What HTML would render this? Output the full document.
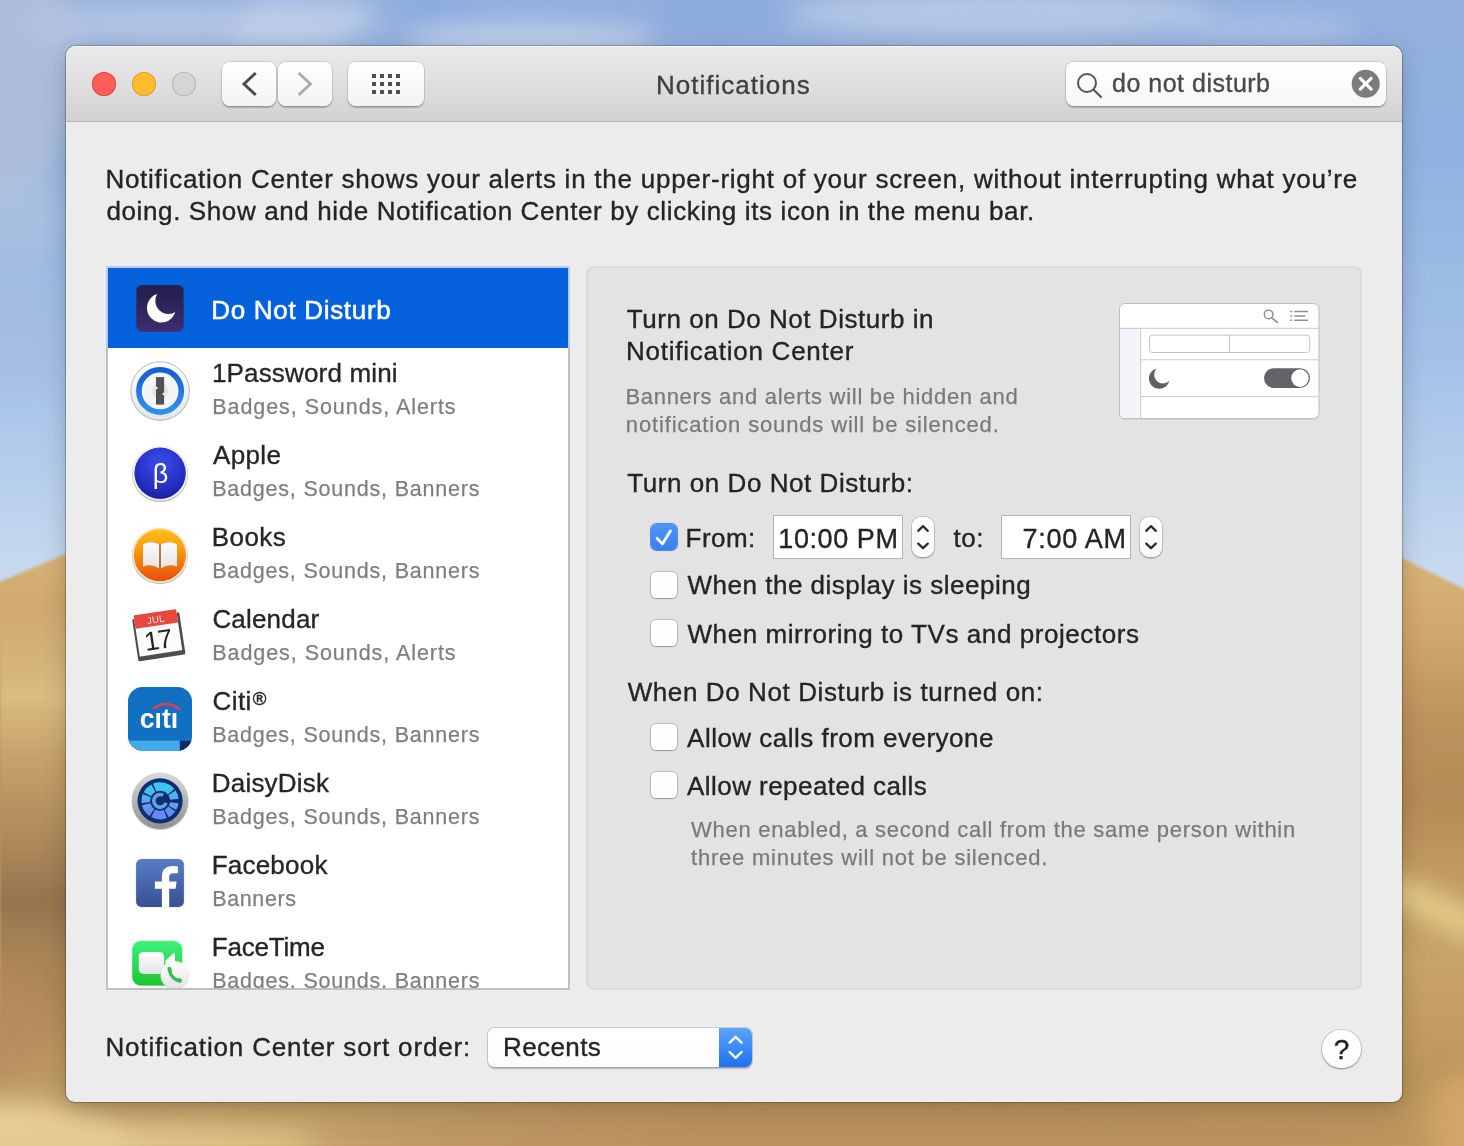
<!DOCTYPE html>
<html lang="en">
<head>
<meta charset="utf-8">
<title>Notifications</title>
<style>
*{box-sizing:border-box;margin:0;padding:0}
html,body{width:1464px;height:1146px;overflow:hidden;background:#b89a6a}
body{position:relative;font-family:"Liberation Sans",sans-serif;-webkit-font-smoothing:antialiased}
.abs{position:absolute}
.t{position:absolute;white-space:pre;font-family:"Liberation Sans",sans-serif}
#wall{position:absolute;left:0;top:0;width:1464px;height:1146px}
#win{position:absolute;left:66px;top:46px;width:1336px;height:1056px;border-radius:10px 10px 9px 9px;background:#ececec;
 box-shadow:0 0 0 1px rgba(0,0,0,.2),0 8px 24px rgba(0,0,0,.19),0 1px 4px rgba(0,0,0,.10)}
#tb{position:absolute;left:0;top:0;width:1336px;height:76px;border-radius:10px 10px 0 0;
 background:linear-gradient(#e9e9e9 0%,#e4e4e4 30%,#d2d2d2 100%);border-bottom:1px solid #b3b3b3;box-shadow:inset 0 1px 0 rgba(255,255,255,.65)}
.tl{position:absolute;top:72px;width:24px;height:24px;border-radius:50%}
.btn{position:absolute;top:62px;height:44px;border-radius:8px;background:linear-gradient(#ffffff,#f3f3f3);
 box-shadow:0 0 0 1px rgba(0,0,0,.10),0 1.5px 1.5px rgba(0,0,0,.22)}
#list{position:absolute;left:106px;top:266px;width:464px;height:724px;background:#fff}
#listb{position:absolute;left:106px;top:266px;width:464px;height:724px;border:2px solid #c0c0c0;pointer-events:none}
#listb2{position:absolute;left:106px;top:266px;width:464px;height:82px;border:2px solid #b4cbef;border-bottom:none;pointer-events:none}
#sel{position:absolute;left:108px;top:268px;width:460px;height:80px;background:#0661dd}
#cover{position:absolute;left:100px;top:990px;width:480px;height:14px;background:#ececec}
#pane{position:absolute;left:586px;top:266px;width:776px;height:724px;background:#e3e3e3;border:2px solid #dbdbdb;border-radius:8px}
.cb{position:absolute;left:651px;width:26px;height:26px;margin-top:1px;border-radius:5.5px;background:linear-gradient(#ffffff,#fbfbfb);
 box-shadow:0 0 0 1px rgba(0,0,0,.17),0 1px 1.5px rgba(0,0,0,.18)}
.cb.on{background:linear-gradient(#4f95f8,#3880f5);box-shadow:0 0 0 1px rgba(40,110,235,.75),0 1px 1.5px rgba(0,0,0,.12)}
.tf{position:absolute;top:515px;width:130px;height:44px;background:#fff;border:1px solid #b4b4b4}
.st{position:absolute;top:517px;width:22px;height:40px;border-radius:9px;background:linear-gradient(#fff,#fafafa);
 box-shadow:0 0 0 1px rgba(0,0,0,.14),0 1.5px 1.5px rgba(0,0,0,.22)}
svg{position:absolute;overflow:visible}
</style>
</head>
<body>
<!--WALL_START-->
<svg id="wall" width="1464" height="1146" viewBox="0 0 1464 1146">
<defs>
<linearGradient id="sky" gradientUnits="userSpaceOnUse" x1="0" y1="0" x2="0" y2="600">
<stop offset="0" stop-color="#93afdc"/><stop offset="0.25" stop-color="#90b2e0"/><stop offset="0.6" stop-color="#a3c1e8"/><stop offset="0.95" stop-color="#c6d9ef"/>
</linearGradient>
<linearGradient id="duneL" gradientUnits="userSpaceOnUse" x1="0" y1="470" x2="0" y2="1156">
<stop offset="0.13" stop-color="#d6b073"/><stop offset="0.2" stop-color="#cfa970"/><stop offset="0.27" stop-color="#d3b178"/><stop offset="0.33" stop-color="#dabb82"/><stop offset="0.42" stop-color="#c6a16a"/><stop offset="0.55" stop-color="#ab875a"/><stop offset="0.63" stop-color="#96744d"/><stop offset="0.70" stop-color="#a88356"/><stop offset="0.80" stop-color="#b48e5c"/><stop offset="0.92" stop-color="#c3a068"/><stop offset="1" stop-color="#dcc088"/>
</linearGradient>
<linearGradient id="duneR" gradientUnits="userSpaceOnUse" x1="0" y1="470" x2="0" y2="1156">
<stop offset="0.13" stop-color="#d9b378"/><stop offset="0.25" stop-color="#cfa66c"/><stop offset="0.36" stop-color="#be935d"/><stop offset="0.48" stop-color="#b58b57"/><stop offset="0.57" stop-color="#c0985f"/><stop offset="0.72" stop-color="#c9a468"/><stop offset="0.88" stop-color="#bd965c"/><stop offset="1" stop-color="#c19a5f"/>
</linearGradient>
<linearGradient id="lr" x1="0" y1="0" x2="1" y2="0">
<stop offset="0" stop-color="#fff" stop-opacity="1"/><stop offset="0.12" stop-color="#fff" stop-opacity="1"/><stop offset="0.5" stop-color="#fff" stop-opacity="0"/>
</linearGradient>
<mask id="mL"><rect width="1464" height="1146" fill="url(#lr)"/></mask>
<filter id="b14" x="-30%" y="-100%" width="160%" height="300%"><feGaussianBlur stdDeviation="12"/></filter>
<filter id="b6" x="-30%" y="-100%" width="160%" height="300%"><feGaussianBlur stdDeviation="6"/></filter>
<filter id="b2"><feGaussianBlur stdDeviation="1.5"/></filter>
</defs>
<rect width="1464" height="620" fill="url(#sky)"/>
<g filter="url(#b14)">
<ellipse cx="0" cy="70" rx="80" ry="130" fill="#b3bfd8" opacity=".8"/>
<rect x="-40" y="160" width="100" height="230" fill="#a8bcdc" opacity=".45"/>
<ellipse cx="170" cy="24" rx="150" ry="22" fill="#b6c7e5" opacity=".85"/>
<path d="M250,0 L420,0 L330,50 L230,50 Z" fill="#c3d1ea" opacity=".8"/>
<ellipse cx="530" cy="40" rx="125" ry="17" fill="#bdcce8" opacity="1"/>
<ellipse cx="1000" cy="14" rx="215" ry="24" fill="#b8c9e7" opacity=".9"/>
<ellipse cx="1270" cy="28" rx="90" ry="13" fill="#afc4e6" opacity=".8"/>
<ellipse cx="15" cy="215" rx="50" ry="40" fill="#b0c4e3" opacity=".55"/>
<ellipse cx="420" cy="8" rx="60" ry="14" fill="#8aabde" opacity=".8"/>
<ellipse cx="720" cy="14" rx="70" ry="22" fill="#89aadd" opacity=".75"/>
</g>
<g filter="url(#b2)">
<path d="M-10,586 L66,554 L300,480 L1100,470 L1402,558 L1474,594 L1474,1156 L-10,1156 Z" fill="url(#duneR)"/>
<path d="M-10,586 L66,554 L300,480 L700,470 L700,1156 L-10,1156 Z" fill="url(#duneL)" mask="url(#mL)"/>
</g>
<g filter="url(#b14)">
<path d="M1380,868 L1480,912 L1480,946 L1380,898 Z" fill="#ecd896" opacity=".8"/>
<ellipse cx="-10" cy="1152" rx="150" ry="50" fill="#ecd39a" opacity=".85"/>
<ellipse cx="120" cy="1150" rx="190" ry="22" fill="#e2c88e" opacity=".6"/>
<ellipse cx="0" cy="1030" rx="40" ry="60" fill="#b98a5c" opacity=".5"/>
<ellipse cx="1470" cy="1120" rx="40" ry="50" fill="#dcaa6c" opacity=".7"/>
<ellipse cx="860" cy="1135" rx="560" ry="30" fill="#b38d5e" opacity=".65"/>
</g>
</svg>
<!--WALL_END-->
<div id="win"><div id="tb"></div></div>
<!--TOOLBAR_START-->
<div class="tl" style="left:92px;background:#fc5f58;box-shadow:inset 0 0 0 1px #df4840"></div>
<div class="tl" style="left:132px;background:#fdbc2f;box-shadow:inset 0 0 0 1px #dea023"></div>
<div class="tl" style="left:172px;background:#d5d5d5;box-shadow:inset 0 0 0 1px #b6b6b6"></div>
<div class="btn" style="left:222px;width:54px"></div>
<div class="btn" style="left:278px;width:54px"></div>
<div class="btn" style="left:348px;width:76px"></div>
<div class="btn" style="left:1066px;width:320px;background:linear-gradient(#ffffff,#f7f7f7)"></div>
<svg style="left:0;top:0" width="1464" height="130" viewBox="0 0 1464 130">
<path d="M254.6,74 L244,84 L254.6,94" fill="none" stroke="#4c4c4c" stroke-width="3" stroke-linecap="square" stroke-linejoin="miter"/>
<path d="M299.8,74 L310.4,84 L299.8,94" fill="none" stroke="#ababab" stroke-width="3" stroke-linecap="square" stroke-linejoin="miter"/>
<g fill="#505050">
<rect x="372" y="74" width="4" height="4"/><rect x="380" y="74" width="4" height="4"/><rect x="388" y="74" width="4" height="4"/><rect x="396" y="74" width="4" height="4"/>
<rect x="372" y="82" width="4" height="4"/><rect x="380" y="82" width="4" height="4"/><rect x="388" y="82" width="4" height="4"/><rect x="396" y="82" width="4" height="4"/>
<rect x="372" y="90" width="4" height="4"/><rect x="380" y="90" width="4" height="4"/><rect x="388" y="90" width="4" height="4"/><rect x="396" y="90" width="4" height="4"/>
</g>
<circle cx="1087" cy="83" r="9" fill="none" stroke="#555" stroke-width="2"/>
<path d="M1093.6,89.8 L1101,97" stroke="#555" stroke-width="2.2" stroke-linecap="round"/>
<circle cx="1365.7" cy="83.8" r="14" fill="#7c7c7c"/>
<path d="M1360.3,78.4 L1371.1,89.2 M1371.1,78.4 L1360.3,89.2" stroke="#fff" stroke-width="3.1" stroke-linecap="round"/>
</svg>
<!--TOOLBAR_END-->
<div id="list"></div>
<div id="sel"></div>
<div id="pane"></div>
<!--ICONS_START-->
<div class="abs" style="left:108px;top:268px;width:460px;height:720px;overflow:hidden">
<!-- Do Not Disturb -->
<svg style="left:12px;top:2px" width="80" height="80" viewBox="0 0 80 80">
<defs><linearGradient id="gd" x1="0" y1="0" x2="0" y2="1"><stop offset="0" stop-color="#211f4c"/><stop offset="1" stop-color="#3f2d70"/></linearGradient></defs>
<rect x="15.9" y="14.7" width="48.2" height="47.4" rx="6.2" fill="#0a3f9c" opacity=".5"/>
<rect x="16.5" y="15.2" width="47" height="46.3" rx="5.6" fill="url(#gd)"/>
<path d="M37.1,24.1 A14.5,14.5 0 1 0 55.3,42.1 A13.2,13.2 0 0 1 37.1,24.1 Z" fill="#fff"/>
</svg>
<!-- 1Password -->
<svg style="left:12px;top:82px" width="80" height="80" viewBox="0 0 80 80">
<defs><linearGradient id="g1a" x1="0" y1="0" x2="0" y2="1"><stop offset="0" stop-color="#ffffff"/><stop offset="1" stop-color="#e4e6ea"/></linearGradient>
<linearGradient id="g1b" x1="0" y1="0" x2="0" y2="1"><stop offset="0" stop-color="#155fd0"/><stop offset="1" stop-color="#2e90ee"/></linearGradient></defs>
<circle cx="40.1" cy="41.5" r="29.6" fill="#000" opacity=".16"/><circle cx="40.1" cy="40.9" r="29.2" fill="url(#g1a)" stroke="#b9bcc2" stroke-width="1"/>
<circle cx="40.1" cy="40.9" r="24.6" fill="#dfeafb"/>
<circle cx="40.1" cy="40.9" r="21.2" fill="#f4f5f7" stroke="url(#g1b)" stroke-width="5.6"/>
<circle cx="40.1" cy="40.9" r="8" fill="#e3e3e5"/>
<rect x="36" y="27.1" width="8.1" height="27.5" fill="#515155"/>
<circle cx="36.3" cy="38" r="1.3" fill="#f4f5f7"/><circle cx="43.8" cy="44" r="1.3" fill="#f4f5f7"/>
</svg>
<!-- Apple beta -->
<svg style="left:12px;top:164px" width="80" height="80" viewBox="0 0 80 80">
<defs><radialGradient id="g2" cx="0.5" cy="0.3" r="0.75"><stop offset="0" stop-color="#3a4de6"/><stop offset="0.6" stop-color="#2832c8"/><stop offset="1" stop-color="#1a1c98"/></radialGradient></defs>
<circle cx="40.1" cy="42.1" r="28" fill="#000" opacity=".28"/>
<circle cx="40.1" cy="41.2" r="27.6" fill="#f2f3fb"/>
<circle cx="40.1" cy="41.2" r="25.7" fill="url(#g2)"/>
<text x="40.4" y="50.6" font-family="Liberation Sans, sans-serif" font-size="27" fill="#fff" text-anchor="middle">β</text>
</svg>
<!-- Books -->
<svg style="left:12px;top:246px" width="80" height="80" viewBox="0 0 80 80">
<defs><linearGradient id="g3" x1="0" y1="0" x2="0" y2="1"><stop offset="0" stop-color="#fdc01a"/><stop offset="0.45" stop-color="#f79310"/><stop offset="1" stop-color="#e64d0c"/></linearGradient>
<linearGradient id="g3p" x1="0" y1="0" x2="0" y2="1"><stop offset="0" stop-color="#fdfdfd"/><stop offset="1" stop-color="#e3e3e3"/></linearGradient></defs>
<circle cx="39.9" cy="42.1" r="28.1" fill="#000" opacity=".26"/>
<circle cx="39.9" cy="41.2" r="27.8" fill="#fbe6c8"/>
<circle cx="39.9" cy="41.2" r="26" fill="url(#g3)"/>
<path d="M23,30.2 Q31.5,26 39.2,30.4 L39.2,54.6 Q31.5,49 23,52.6 Z" fill="url(#g3p)"/>
<path d="M57,30.2 Q48.5,26 40.8,30.4 L40.8,54.6 Q48.5,49 57,52.6 Z" fill="url(#g3p)"/>
<path d="M40,30.6 V54.4" stroke="#9a6a3a" stroke-width="1.4"/>
</svg>
<!-- Calendar -->
<svg style="left:12px;top:328px" width="80" height="80" viewBox="0 0 80 80">
<g transform="rotate(-8.6 38.5 38)">
<rect x="14.6" y="19.5" width="47.6" height="42.6" rx="1.5" fill="#4d4d50"/>
<rect x="16.6" y="16" width="43" height="41.5" rx="1" fill="#fbfbfb"/>
<path d="M16.6,17 Q16.6,16 17.6,16 H58.6 Q59.6,16 59.6,17 V29.5 H16.6 Z" fill="#e9463f"/>
<text x="38" y="26.6" font-family="Liberation Sans, sans-serif" font-size="9.5" fill="#fde9e6" text-anchor="middle" letter-spacing="0.3">JUL</text>
<text x="37" y="53" font-family="Liberation Sans, sans-serif" font-size="26.5" fill="#222" text-anchor="middle" letter-spacing="-1">17</text>
</g>
</svg>
<!-- Citi -->
<svg style="left:12px;top:410px" width="80" height="80" viewBox="0 0 80 80">
<defs><clipPath id="cc"><rect x="8" y="9.1" width="64" height="63.6" rx="14.5"/></clipPath></defs>
<g clip-path="url(#cc)">
<rect x="8" y="9" width="64" height="64" fill="#1070c1"/>
<rect x="8" y="62.6" width="64" height="11" fill="#43a9ea"/>
<rect x="59.8" y="62.6" width="13" height="11" fill="#0b2c6a"/>
</g>
<path d="M33.8,30.4 Q46,21.4 59.2,31.2" fill="none" stroke="#dc3d55" stroke-width="2.6" stroke-linecap="round"/>
<text x="19.8" y="49.9" font-family="Liberation Sans, sans-serif" font-size="28.5" font-weight="700" fill="#fff" textLength="38.4" lengthAdjust="spacingAndGlyphs">cıtı</text>
</svg>
<!-- DaisyDisk -->
<svg style="left:12px;top:492px" width="80" height="80" viewBox="0 0 80 80">
<defs><linearGradient id="g5" x1="0" y1="0" x2="0" y2="1"><stop offset="0" stop-color="#d9dadc"/><stop offset="0.5" stop-color="#b4b5b8"/><stop offset="1" stop-color="#8e8f93"/></linearGradient>
<linearGradient id="g5b" x1="0" y1="0" x2="0" y2="1"><stop offset="0" stop-color="#35c8f5"/><stop offset="0.5" stop-color="#5aa6f0"/><stop offset="1" stop-color="#6a86f0"/></linearGradient></defs>
<circle cx="40.1" cy="41.6" r="28.5" fill="#000" opacity=".22"/>
<circle cx="40.1" cy="40.8" r="28.2" fill="url(#g5)"/>
<circle cx="40.1" cy="40.8" r="22.6" fill="#0f2e6b"/>
<circle cx="40.1" cy="40.8" r="14.3" fill="none" stroke="url(#g5b)" stroke-width="8.6" stroke-dasharray="5.49 1.25 6.74 1.5 12.48 1.5 10.23 1.5 7.24 1.5 8.49 1.5 17.97 1.5 6.99 3.99" stroke-dashoffset="-2"/>
<circle cx="40.1" cy="40.8" r="6.3" fill="none" stroke="#5ea3ee" stroke-width="3.6" stroke-dasharray="30 9.6" transform="rotate(20 40.1 40.8)"/>
<path d="M40.1,40.8 L61,39.2 L61,41.6 Z" fill="#0f2e6b"/>
</svg>
<!-- Facebook -->
<svg style="left:12px;top:574px" width="80" height="80" viewBox="0 0 80 80">
<defs><linearGradient id="g6" x1="0" y1="0" x2="0" y2="1"><stop offset="0" stop-color="#557dc8"/><stop offset="1" stop-color="#375192"/></linearGradient></defs>
<rect x="15.6" y="16.8" width="48.8" height="48.8" rx="6" fill="#9fb3e0" opacity=".35"/>
<rect x="16.1" y="17.1" width="47.8" height="47.8" rx="5.4" fill="url(#g6)"/>
<path d="M41.9,64.9 V46.8 H34.9 V39.4 H41.9 V34.6 C41.9,27.6 46,24.1 52.4,24.1 C54.6,24.1 56.8,24.3 57.9,24.5 V31.2 H54 C50.4,31.2 49.2,32.6 49.2,35.2 V39.4 H56.6 L55.6,46.8 H49.2 V64.9 Z" fill="#fff"/>
</svg>
<!-- FaceTime -->
<svg style="left:12px;top:656px" width="80" height="80" viewBox="0 0 80 80">
<defs><linearGradient id="g7" x1="0" y1="0" x2="0" y2="1"><stop offset="0" stop-color="#3cf27c"/><stop offset="1" stop-color="#1cc32c"/></linearGradient>
<linearGradient id="g7b" x1="0" y1="0" x2="0" y2="1"><stop offset="0" stop-color="#ffffff"/><stop offset="1" stop-color="#e2e4e2"/></linearGradient></defs>
<rect x="11.8" y="16.4" width="50.8" height="45.6" rx="9" fill="#7af59a" opacity=".45"/>
<rect x="12.3" y="16.9" width="49.8" height="44.6" rx="8.6" fill="url(#g7)"/>
<rect x="18.8" y="27.9" width="25.3" height="22" rx="4.5" fill="url(#g7b)"/>
<path d="M45.4,36.6 L53.4,29.2 Q55,28 55,30 V48 Q55,50 53.4,48.8 L45.4,41.6 Z" fill="#f6f8f6"/>
<circle cx="54.5" cy="51.4" r="14.2" fill="#b9bcb9" opacity=".6"/>
<circle cx="54.5" cy="51" r="13.9" fill="url(#g7b)"/>
<path d="M47.6,44.6 Q46.8,43.6 48.2,43 L50,43 Q50.8,43.2 51.2,44 L52.2,47 Q52.2,47.8 51.6,48.4 Q53.6,52.6 57.4,54.4 Q58.2,53.8 59,54 L61.6,55.2 Q62.4,55.8 62,56.8 L61.2,58.2 Q60.4,59 59,58.8 Q50.4,56.6 47.6,46.6 Z" fill="#3dba56"/>
</svg>
</div>
<!--ICONS_END-->
<!--PANE_START-->
<div class="cb on" style="top:523px"></div>
<div class="cb" style="top:571px"></div>
<div class="cb" style="top:619px"></div>
<div class="cb" style="top:723px"></div>
<div class="cb" style="top:771px"></div>
<div class="tf" style="left:773px"></div>
<div class="tf" style="left:1001px"></div>
<div class="st" style="left:912px"></div>
<div class="st" style="left:1140px"></div>
<svg style="left:0;top:0" width="1464" height="1146" viewBox="0 0 1464 1146">
<path d="M657.2,538.4 L662.5,543.8 L670.4,531" fill="none" stroke="#fff" stroke-width="2.9" stroke-linecap="round" stroke-linejoin="round"/>
<g fill="none" stroke="#2e2e2e" stroke-width="2.3" stroke-linecap="round" stroke-linejoin="round">
<path d="M918.2,530.8 L923,526.2 L927.8,530.8"/><path d="M918.2,543.6 L923,548.2 L927.8,543.6"/>
<path d="M1146.2,530.8 L1151,526.2 L1155.8,530.8"/><path d="M1146.2,543.6 L1151,548.2 L1155.8,543.6"/>
</g>
<!-- illustration -->
<g>
<rect x="1119.5" y="304.5" width="199.5" height="115" rx="5.5" fill="#000" opacity=".12"/>
<rect x="1119.5" y="303.5" width="199.5" height="115" rx="5.5" fill="#fff" stroke="#bdbdbd" stroke-width="1"/>
<path d="M1120,328.5 L1120,413 Q1120,418 1125,418 L1140.5,418 L1140.5,328.5 Z" fill="#f4f4fb"/>
<path d="M1120,328.3 H1318.5 M1140.7,328.3 V418 M1140.7,359.8 H1318.5 M1140.7,396.7 H1318.5" stroke="#c9c9c9" stroke-width="1" fill="none"/>
<rect x="1149.5" y="335.2" width="160.3" height="17.3" rx="3" fill="#fff" stroke="#c4c4c4" stroke-width="1"/>
<path d="M1229.5,335.2 V352.5" stroke="#c4c4c4" stroke-width="1"/>
<path d="M1156.6,368.4 A10.4,10.4 0 1 0 1169.4,380.8 A8.3,8.3 0 0 1 1156.6,368.4 Z" fill="#5f5f66"/>
<rect x="1264" y="368.2" width="46" height="19.8" rx="9.9" fill="#626267"/>
<circle cx="1300" cy="378.1" r="8.8" fill="#fff"/>
<circle cx="1268.6" cy="314.4" r="4.3" fill="none" stroke="#8c8c8c" stroke-width="1.4"/>
<path d="M1271.8,317.8 L1277.4,322.4" stroke="#8c8c8c" stroke-width="1.6" stroke-linecap="round"/>
<path d="M1294.3,311.6 H1308 M1294.3,315.9 H1305.2 M1294.3,320.2 H1308" stroke="#909090" stroke-width="1.5"/>
<path d="M1290.2,311.6 H1292.2 M1290.2,315.9 H1292.2 M1290.2,320.2 H1292.2" stroke="#909090" stroke-width="1.5"/>
</g>
</svg>
<!--PANE_END-->
<!--BOTTOM_START-->
<div class="abs" style="left:488px;top:1027.5px;width:264px;height:39.5px;border-radius:6.5px;background:linear-gradient(#fff,#fcfcfc);box-shadow:0 0 0 1px rgba(0,0,0,.13),0 1.5px 1.5px rgba(0,0,0,.22);overflow:hidden">
<div class="abs" style="right:0;top:0;width:33px;height:39.5px;background:linear-gradient(#5aa4fa,#1f72f2)"></div>
</div>
<svg style="left:0;top:0;z-index:3" width="1464" height="1146" viewBox="0 0 1464 1146">
<g fill="none" stroke="#fff" stroke-width="2.4" stroke-linecap="round" stroke-linejoin="round">
<path d="M729.6,1042.6 L735.6,1036.8 L741.6,1042.6"/><path d="M729.6,1052 L735.6,1057.8 L741.6,1052"/>
</g>
</svg>
<div class="abs" style="left:1322px;top:1029.5px;width:38.5px;height:38.5px;border-radius:50%;background:linear-gradient(#fff,#fbfbfb);box-shadow:0 0 0 1px rgba(0,0,0,.15),0 1.5px 2px rgba(0,0,0,.25)"></div>
<!--BOTTOM_END-->
<div class="t" style="left:656.09px;top:72.00px;font-size:26px;line-height:26px;color:#3f3f3f;letter-spacing:1.005px;-webkit-text-stroke:0.35px #3f3f3f;">Notifications</div>
<div class="t" style="left:1112.00px;top:71.00px;font-size:25px;line-height:25px;color:#4a4a4a;letter-spacing:0.503px;-webkit-text-stroke:0.35px #4a4a4a;">do not disturb</div>
<div class="t" style="left:105.38px;top:166.00px;font-size:26px;line-height:26px;color:#242424;letter-spacing:0.753px;-webkit-text-stroke:0.35px #242424;">Notification Center shows your alerts in the upper-right of your screen, without interrupting what you’re</div>
<div class="t" style="left:106.43px;top:198.00px;font-size:26px;line-height:26px;color:#242424;letter-spacing:0.619px;-webkit-text-stroke:0.35px #242424;">doing. Show and hide Notification Center by clicking its icon in the menu bar.</div>
<div class="t" style="left:211.33px;top:297.00px;font-size:26px;line-height:26px;color:#ffffff;letter-spacing:0.683px;-webkit-text-stroke:0.55px #ffffff;">Do Not Disturb</div>
<div class="t" style="left:211.95px;top:360.00px;font-size:26px;line-height:26px;color:#262626;letter-spacing:0.166px;-webkit-text-stroke:0.35px #262626;">1Password mini</div>
<div class="t" style="left:212.21px;top:397.00px;font-size:21.5px;line-height:21.5px;color:#7f7f7f;letter-spacing:0.946px;-webkit-text-stroke:0.25px #7f7f7f;">Badges, Sounds, Alerts</div>
<div class="t" style="left:213.07px;top:442.00px;font-size:26px;line-height:26px;color:#262626;letter-spacing:0.329px;-webkit-text-stroke:0.35px #262626;">Apple</div>
<div class="t" style="left:212.15px;top:479.00px;font-size:21.5px;line-height:21.5px;color:#7f7f7f;letter-spacing:0.799px;-webkit-text-stroke:0.25px #7f7f7f;">Badges, Sounds, Banners</div>
<div class="t" style="left:211.71px;top:524.00px;font-size:26px;line-height:26px;color:#262626;letter-spacing:0.461px;-webkit-text-stroke:0.35px #262626;">Books</div>
<div class="t" style="left:212.15px;top:561.00px;font-size:21.5px;line-height:21.5px;color:#7f7f7f;letter-spacing:0.799px;-webkit-text-stroke:0.25px #7f7f7f;">Badges, Sounds, Banners</div>
<div class="t" style="left:212.41px;top:606.00px;font-size:26px;line-height:26px;color:#262626;letter-spacing:0.182px;-webkit-text-stroke:0.35px #262626;">Calendar</div>
<div class="t" style="left:212.21px;top:643.00px;font-size:21.5px;line-height:21.5px;color:#7f7f7f;letter-spacing:0.946px;-webkit-text-stroke:0.25px #7f7f7f;">Badges, Sounds, Alerts</div>
<div class="t" style="left:212.41px;top:688.00px;font-size:26px;line-height:26px;color:#262626;letter-spacing:0.467px;-webkit-text-stroke:0.35px #262626;">Citi</div>
<div class="t" style="left:252.80px;top:690.00px;font-size:18.5px;line-height:18.5px;color:#262626;-webkit-text-stroke:0.45px #262626;">®</div>
<div class="t" style="left:212.15px;top:725.00px;font-size:21.5px;line-height:21.5px;color:#7f7f7f;letter-spacing:0.799px;-webkit-text-stroke:0.25px #7f7f7f;">Badges, Sounds, Banners</div>
<div class="t" style="left:211.72px;top:770.00px;font-size:26px;line-height:26px;color:#262626;letter-spacing:0.215px;-webkit-text-stroke:0.35px #262626;">DaisyDisk</div>
<div class="t" style="left:212.15px;top:807.00px;font-size:21.5px;line-height:21.5px;color:#7f7f7f;letter-spacing:0.799px;-webkit-text-stroke:0.25px #7f7f7f;">Badges, Sounds, Banners</div>
<div class="t" style="left:211.71px;top:852.00px;font-size:26px;line-height:26px;color:#262626;letter-spacing:0.214px;-webkit-text-stroke:0.35px #262626;">Facebook</div>
<div class="t" style="left:212.21px;top:889.00px;font-size:21.5px;line-height:21.5px;color:#7f7f7f;letter-spacing:0.632px;-webkit-text-stroke:0.25px #7f7f7f;">Banners</div>
<div class="t" style="left:211.71px;top:934.00px;font-size:26px;line-height:26px;color:#262626;letter-spacing:-0.200px;-webkit-text-stroke:0.35px #262626;">FaceTime</div>
<div class="t" style="left:212.15px;top:971.00px;font-size:21.5px;line-height:21.5px;color:#7f7f7f;letter-spacing:0.799px;-webkit-text-stroke:0.25px #7f7f7f;">Badges, Sounds, Banners</div>
<div class="t" style="left:626.87px;top:306.00px;font-size:26px;line-height:26px;color:#242424;letter-spacing:0.532px;-webkit-text-stroke:0.35px #242424;">Turn on Do Not Disturb in</div>
<div class="t" style="left:626.02px;top:338.00px;font-size:26px;line-height:26px;color:#242424;letter-spacing:0.751px;-webkit-text-stroke:0.35px #242424;">Notification Center</div>
<div class="t" style="left:625.43px;top:386.00px;font-size:22px;line-height:22px;color:#7a7a7a;letter-spacing:0.705px;-webkit-text-stroke:0.25px #7a7a7a;">Banners and alerts will be hidden and</div>
<div class="t" style="left:625.80px;top:414.00px;font-size:22px;line-height:22px;color:#7a7a7a;letter-spacing:0.850px;-webkit-text-stroke:0.25px #7a7a7a;">notification sounds will be silenced.</div>
<div class="t" style="left:627.33px;top:470.00px;font-size:26px;line-height:26px;color:#242424;letter-spacing:0.551px;-webkit-text-stroke:0.35px #242424;">Turn on Do Not Disturb:</div>
<div class="t" style="left:685.62px;top:525.00px;font-size:26px;line-height:26px;color:#242424;letter-spacing:0.464px;-webkit-text-stroke:0.35px #242424;">From:</div>
<div class="t" style="left:778.29px;top:526.00px;font-size:27px;line-height:27px;color:#242424;letter-spacing:0.586px;-webkit-text-stroke:0.35px #242424;">10:00 PM</div>
<div class="t" style="left:953.43px;top:525.00px;font-size:26px;line-height:26px;color:#242424;letter-spacing:0.600px;-webkit-text-stroke:0.35px #242424;">to:</div>
<div class="t" style="left:1022.62px;top:526.00px;font-size:27px;line-height:27px;color:#242424;letter-spacing:0.703px;-webkit-text-stroke:0.35px #242424;">7:00 AM</div>
<div class="t" style="left:687.50px;top:572.00px;font-size:26px;line-height:26px;color:#242424;letter-spacing:0.508px;-webkit-text-stroke:0.35px #242424;">When the display is sleeping</div>
<div class="t" style="left:687.50px;top:621.00px;font-size:26px;line-height:26px;color:#242424;letter-spacing:0.569px;-webkit-text-stroke:0.35px #242424;">When mirroring to TVs and projectors</div>
<div class="t" style="left:627.64px;top:679.00px;font-size:26px;line-height:26px;color:#242424;letter-spacing:0.607px;-webkit-text-stroke:0.35px #242424;">When Do Not Disturb is turned on:</div>
<div class="t" style="left:687.09px;top:725.00px;font-size:26px;line-height:26px;color:#242424;letter-spacing:0.482px;-webkit-text-stroke:0.35px #242424;">Allow calls from everyone</div>
<div class="t" style="left:687.09px;top:773.00px;font-size:26px;line-height:26px;color:#242424;letter-spacing:0.444px;-webkit-text-stroke:0.35px #242424;">Allow repeated calls</div>
<div class="t" style="left:691.04px;top:819.00px;font-size:22px;line-height:22px;color:#7a7a7a;letter-spacing:0.726px;-webkit-text-stroke:0.25px #7a7a7a;">When enabled, a second call from the same person within</div>
<div class="t" style="left:691.05px;top:847.00px;font-size:22px;line-height:22px;color:#7a7a7a;letter-spacing:0.771px;-webkit-text-stroke:0.25px #7a7a7a;">three minutes will not be silenced.</div>
<div class="t" style="left:105.42px;top:1034.00px;font-size:26px;line-height:26px;color:#242424;letter-spacing:0.842px;-webkit-text-stroke:0.35px #242424;">Notification Center sort order:</div>
<div class="t" style="left:503.08px;top:1034.00px;font-size:26px;line-height:26px;color:#242424;letter-spacing:0.385px;-webkit-text-stroke:0.35px #242424;">Recents</div>
<div class="t" style="left:1333.85px;top:1036.00px;font-size:28px;line-height:28px;color:#1e1e1e;-webkit-text-stroke:0.4px #1e1e1e;">?</div>
<div id="cover"></div>
<div id="listb"></div>
<div id="listb2"></div>

</body>
</html>
